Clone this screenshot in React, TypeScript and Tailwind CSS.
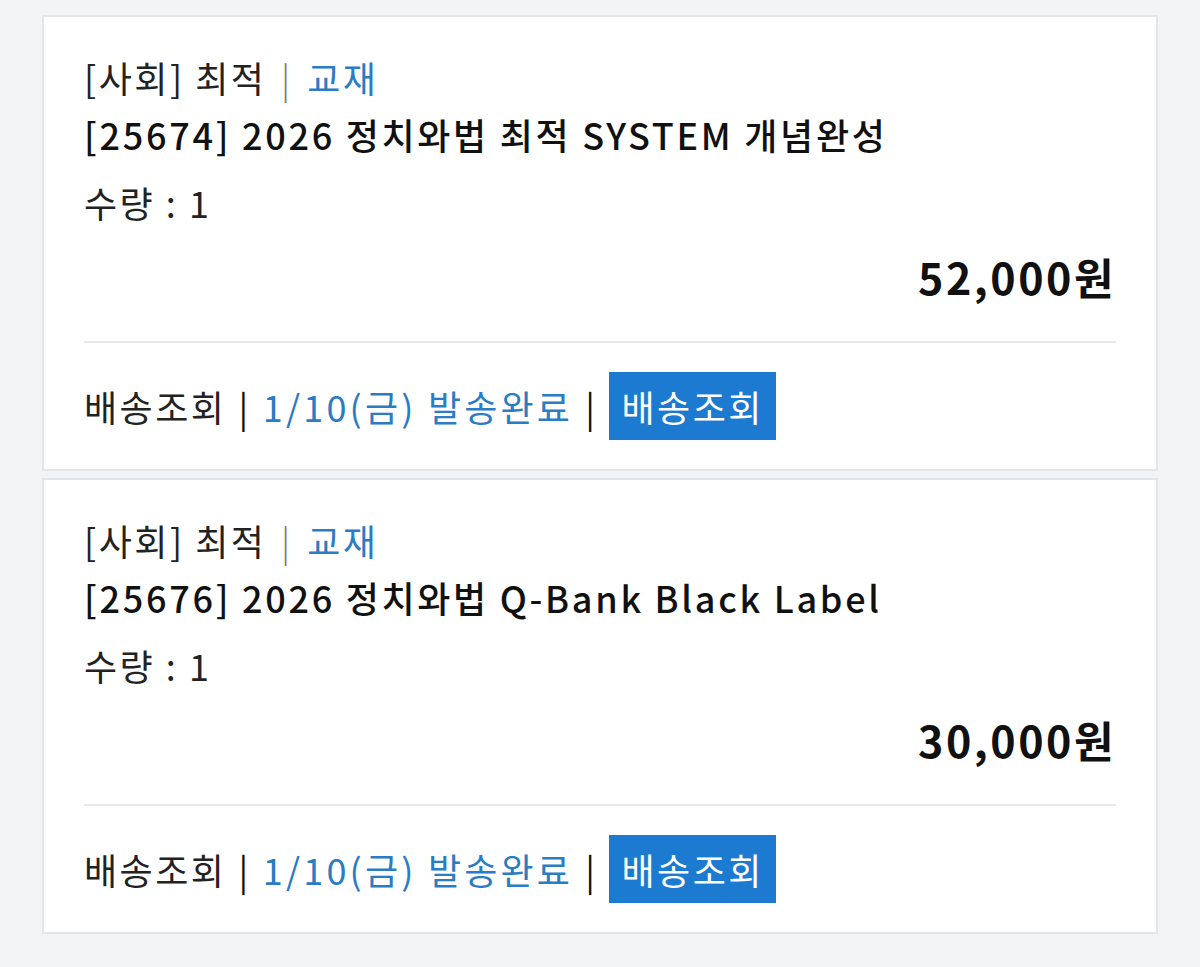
// 주문 상세 — 교재 배송 카드 목록
const orders = [
  { id: '25674', title: '2026 정치와법 최적 SYSTEM 개념완성', qty: 1, price: '52,000' },
  { id: '25676', title: '2026 정치와법 Q-Bank Black Label', qty: 1, price: '30,000' },
]

const font = { fontFamily: '"Noto Sans CJK KR", "Noto Sans", sans-serif' }

function OrderCard({ order }: { order: (typeof orders)[number] }) {
  return (
    <div className="border-2 border-[#e4e5e8] bg-white px-[40px] pt-[32px] pb-[29px]">
      <p className="text-[36px] leading-[57px] tracking-[2.5px] text-[#222]">
        [사회] 최적 <span className="mx-[4px] font-light text-[#777]">|</span>{' '}
        <span className="text-[#2a7cc4]">교재</span>
      </p>
      <p className="text-[36px] leading-[57px] tracking-[2.7px] font-medium text-[#111]">
        [{order.id}] {order.title}
      </p>
      <p className="mt-[11px] text-[36px] leading-[57px] tracking-[2.5px] text-[#222]">
        수량 : {order.qty}
      </p>
      <p className="mt-[17px] text-right text-[43px] leading-[57px] tracking-[2.5px] font-bold text-[#111]">
        {order.price}원
      </p>
      <div className="mt-[36px] h-[2px] bg-[#e6e7e9]" />
      <div className="mt-[29px] flex items-center text-[36px] tracking-[2.5px] text-[#222]">
        <span>배송조회</span>
        <span className="mx-[12px] text-[#111]">|</span>
        <span className="tracking-[3.2px] text-[#2a7cc4]">1/10(금) 발송완료</span>
        <span className="mx-[12px] text-[#111]">|</span>
        <span className="flex h-[68px] items-center bg-[#1c7bd0] px-[12px] text-white">
          배송조회
        </span>
      </div>
    </div>
  )
}

export default function App() {
  return (
    <div className="min-h-[967px] bg-[#f3f4f6] px-[42px] pt-[15px]" style={font}>
      <div className="flex flex-col gap-[7px]">
        {orders.map((o) => (
          <OrderCard key={o.id} order={o} />
        ))}
      </div>
    </div>
  )
}
